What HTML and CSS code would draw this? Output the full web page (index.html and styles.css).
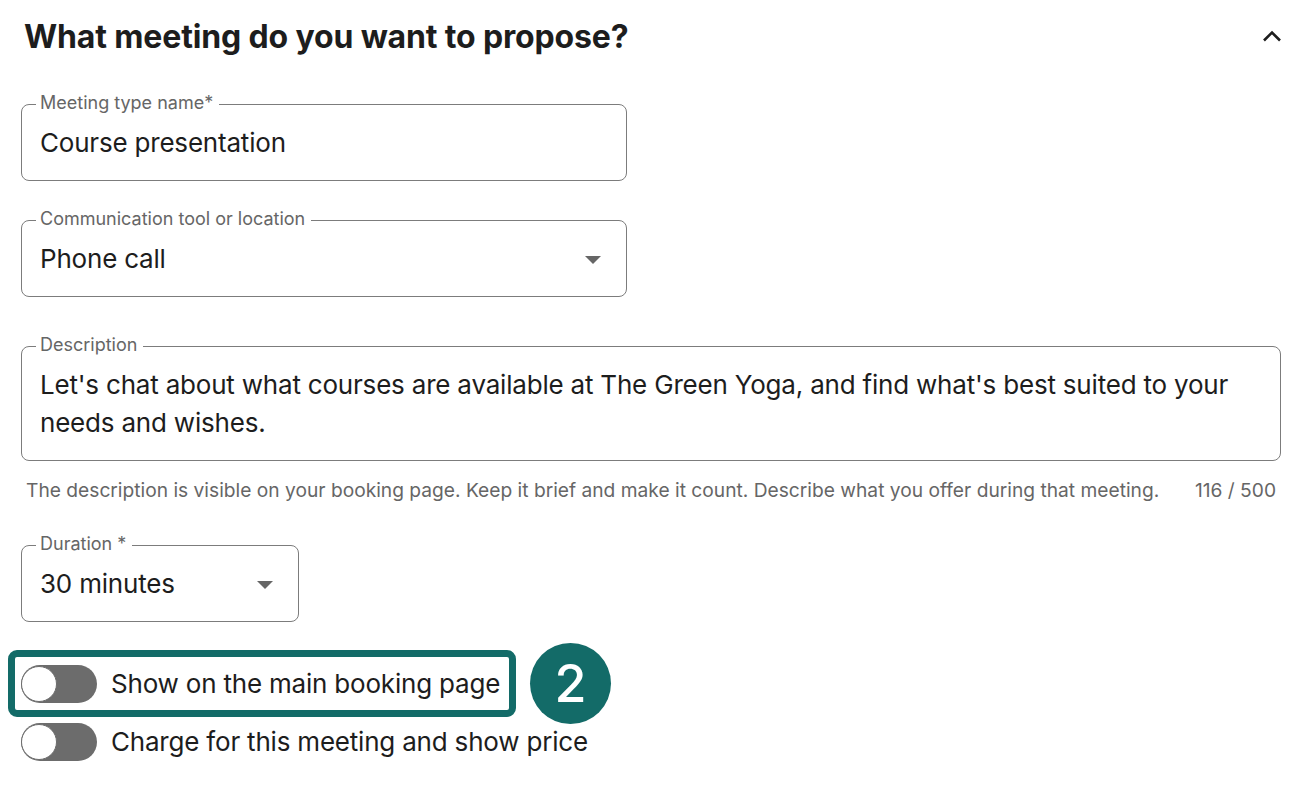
FILE: index.html
```html
<!DOCTYPE html>
<html lang="en">
<head>
<meta charset="utf-8">
<title>Meeting type</title>
<link rel="stylesheet" href="styles.css">
</head>
<body>
<main class="page">
  <header class="section-head">
    <h2 class="title">What meeting do you want to propose?</h2>
    <svg class="chevron" width="20" height="12" viewBox="0 0 20 12" aria-hidden="true">
      <path d="M2 10.5 L10 2.5 L18 10.5" fill="none" stroke="#1d1d1d" stroke-width="2.6"/>
    </svg>
  </header>

  <div class="field field-name">
    <span class="field-label">Meeting type name*</span>
    <span class="field-value">Course presentation</span>
  </div>

  <div class="field field-tool">
    <span class="field-label">Communication tool or location</span>
    <span class="field-value">Phone call</span>
    <span class="caret"></span>
  </div>

  <div class="field field-desc">
    <span class="field-label">Description</span>
    <span class="field-value multiline">Let's chat about what courses are available at The Green Yoga, and find what's best suited to your needs and wishes.</span>
  </div>
  <div class="helper">
    <span>The description is visible on your booking page. Keep it brief and make it count. Describe what you offer during that meeting.</span>
    <span>116 / 500</span>
  </div>

  <div class="field field-duration">
    <span class="field-label">Duration *</span>
    <span class="field-value">30 minutes</span>
    <span class="caret"></span>
  </div>

  <div class="toggle-row highlighted-row">
    <div class="highlight">
      <span class="switch"><span class="knob"></span></span>
      <span class="toggle-text">Show on the main booking page</span>
    </div>
    <span class="badge">2</span>
  </div>

  <div class="toggle-row plain-row">
    <span class="switch"><span class="knob"></span></span>
    <span class="toggle-text">Charge for this meeting and show price</span>
  </div>
</main>
</body>
</html>
```

FILE: styles.css
```css
* { box-sizing: border-box; }

html, body {
  margin: 0;
  background: #ffffff;
}

body {
  font-family: Inter, "Noto Sans", "Liberation Sans", sans-serif;
  color: #1d1d1d;
}

.page {
  width: 1298px;
  padding: 15px 17px 0 21px;
}

.section-head {
  display: flex;
  align-items: center;
  justify-content: space-between;
  height: 44px;
}

.title {
  margin: 0 0 0 3px;
  font-size: 32px;
  line-height: 44px;
  font-weight: 700;
  letter-spacing: -0.15px;
  color: #1d1d1d;
}

.chevron {
  display: block;
  margin-right: -1px;
  margin-top: -2px;
}

.field {
  position: relative;
  display: flex;
  align-items: center;
  border: 1px solid #7c7c7c;
  border-radius: 8px;
  padding: 0 18px;
  height: 77px;
}

.field-label {
  position: absolute;
  left: 14px;
  top: -14px;
  padding: 0 6px 0 4px;
  background: #ffffff;
  font-size: 18px;
  line-height: 24px;
  color: #666666;
  white-space: nowrap;
}

.field-value {
  font-size: 26px;
  line-height: 30px;
  letter-spacing: -0.2px;
  color: #1d1d1d;
}

.field-name {
  width: 606px;
  margin-top: 45px;
}

.field-tool {
  width: 606px;
  margin-top: 39px;
  justify-content: space-between;
}

.caret {
  width: 0;
  height: 0;
  border-left: 8px solid transparent;
  border-right: 8px solid transparent;
  border-top: 8px solid #666666;
  margin-right: 7px;
  margin-top: 2px;
}

.field-desc {
  width: 1260px;
  height: 115px;
  margin-top: 49px;
}

.multiline {
  line-height: 38px;
}

.helper {
  display: flex;
  justify-content: space-between;
  padding: 0 5px;
  margin-top: 17px;
  font-size: 19.2px;
  line-height: 24px;
  color: #666666;
}

.field-duration {
  width: 278px;
  margin-top: 43px;
  justify-content: space-between;
}

.toggle-row {
  display: flex;
  align-items: center;
}

.highlighted-row {
  margin-top: 21px;
  margin-left: -13px;
  gap: 14px;
}

.highlight {
  display: flex;
  align-items: center;
  gap: 14px;
  border: 7px solid #136b68;
  border-radius: 9px;
  padding: 8px 9px 7px 6px;
  background: #ffffff;
}

.plain-row {
  margin-top: -1px;
  gap: 14px;
}

.switch {
  display: block;
  position: relative;
  width: 76px;
  height: 38px;
  border-radius: 19px;
  background: #6c6c6c;
  flex: none;
}

.knob {
  position: absolute;
  left: 0;
  top: 1px;
  width: 36px;
  height: 36px;
  border-radius: 50%;
  background: #ffffff;
  border: 1.5px solid #6c6c6c;
}

.toggle-text {
  font-size: 26px;
  line-height: 30px;
  letter-spacing: -0.2px;
  color: #1d1d1d;
  white-space: nowrap;
}

.badge {
  display: flex;
  align-items: center;
  justify-content: center;
  width: 81px;
  height: 81px;
  border-radius: 50%;
  background: #136b68;
  color: #ffffff;
  font-size: 52px;
  font-weight: 500;
  line-height: 1;
  flex: none;
}
```
